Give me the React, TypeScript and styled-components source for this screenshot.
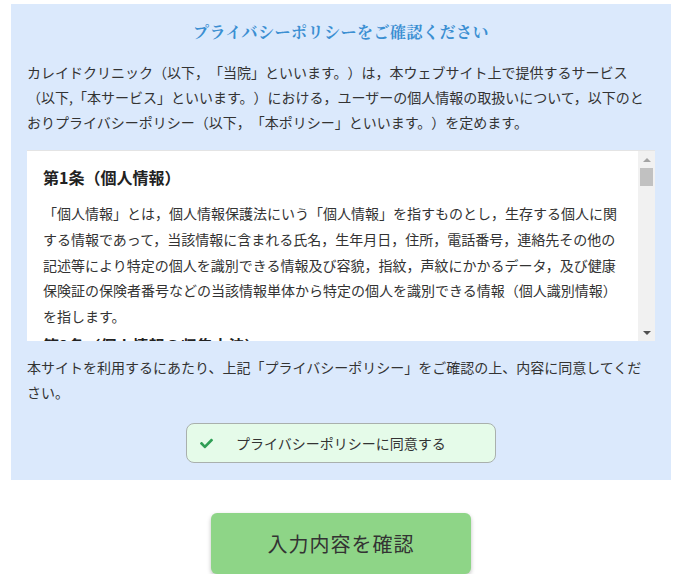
import styled, { createGlobalStyle } from "styled-components";
import { FaCheck } from "react-icons/fa";

const sections = [
  {
    title: "第1条（個人情報）",
    body: "「個人情報」とは，個人情報保護法にいう「個人情報」を指すものとし，生存する個人に関する情報であって，当該情報に含まれる氏名，生年月日，住所，電話番号，連絡先その他の記述等により特定の個人を識別できる情報及び容貌，指紋，声紋にかかるデータ，及び健康保険証の保険者番号などの当該情報単体から特定の個人を識別できる情報（個人識別情報）を指します。",
  },
  {
    title: "第2条（個人情報の収集方法）",
    body: "当院は，ユーザーが利用登録をする際に氏名，生年月日，住所，電話番号，メールアドレス，銀行口座番号，クレジットカード番号，運転免許証番号などの個人情報をお尋ねすることがあります。",
  },
  {
    title: "第3条（個人情報を収集・利用する目的）",
    body: "当院が個人情報を収集・利用する目的は，当院サービスの提供・運営のため，ユーザーからのお問い合わせに回答するためです。",
  },
];

const GlobalStyle = createGlobalStyle`
  body {
    margin: 0;
    background: #ffffff;
    font-family: "Noto Sans CJK JP", "Noto Sans", sans-serif;
    color: #333333;
    text-spacing-trim: space-all;
  }
`;

const Page = styled.div`
  width: 660px;
  margin: 4px 0 0 11px;
  display: flex;
  flex-direction: column;
  align-items: center;
`;

const Panel = styled.section`
  box-sizing: border-box;
  width: 100%;
  background: #dbe9fc;
  padding: 16px 16px 17px;
  display: flex;
  flex-direction: column;
`;

const Title = styled.h2`
  margin: 0 0 16px;
  text-align: center;
  font-family: "Noto Serif CJK JP", "Noto Sans CJK JP", serif;
  font-size: 16px;
  line-height: 24px;
  font-weight: 700;
  color: #3b8fd2;
  letter-spacing: 0.5px;
`;

const Lead = styled.p`
  margin: 0 0 15px;
  font-size: 14px;
  line-height: 25px;
  color: #333333;
`;

const PolicyFrame = styled.div`
  display: flex;
  height: 191px;
  background: #ffffff;
  border-top: 1px solid #e4e4e4;
  box-sizing: border-box;
`;

const PolicyContent = styled.div`
  flex: 1;
  min-width: 0;
  overflow: hidden;
  padding: 14px 16px 0;
`;

const ScrollRail = styled.div`
  width: 17px;
  flex-shrink: 0;
  display: flex;
  flex-direction: column;
  background: #f1f1f1;
`;

const ScrollArrow = styled.div<{ $dir: "up" | "down" }>`
  height: 17px;
  display: flex;
  align-items: center;
  justify-content: center;

  &::before {
    content: "";
    width: 0;
    height: 0;
    border-left: 4px solid transparent;
    border-right: 4px solid transparent;
    ${(p) =>
      p.$dir === "up"
        ? "border-bottom: 4px solid #a3a3a3;"
        : "border-top: 4px solid #505050;"}
  }
`;

const ScrollThumb = styled.div`
  height: 18px;
  margin: 0 2px;
  background: #c1c1c1;
`;

const ScrollTrack = styled.div`
  flex: 1;
`;

const Article = styled.div`
  margin-bottom: 3px;
`;

const ArticleTitle = styled.h3`
  margin: 0 0 12px;
  font-size: 16px;
  line-height: 24px;
  font-weight: 700;
  color: #222222;
`;

const ArticleBody = styled.p`
  margin: 0;
  font-size: 14px;
  line-height: 25.8px;
  color: #333333;
`;

const Note = styled.p`
  margin: 14px 0 18px;
  font-size: 14px;
  line-height: 25px;
  color: #333333;
`;

const AgreeButton = styled.button`
  align-self: center;
  box-sizing: border-box;
  width: 310px;
  height: 40px;
  display: flex;
  align-items: center;
  gap: 23px;
  padding: 0 0 0 13px;
  background: #e5fbe9;
  border: 1px solid #a9b0ad;
  border-radius: 8px;
  font-family: inherit;
  font-size: 14px;
  color: #333333;
  cursor: pointer;

  svg {
    color: #2f9e55;
    font-size: 13px;
    flex-shrink: 0;
  }
`;

const ConfirmButton = styled.button`
  margin-top: 33px;
  width: 260px;
  height: 61px;
  background: #8ed587;
  border: none;
  border-radius: 6px;
  box-shadow: 0 2px 4px rgba(0, 0, 0, 0.25);
  font-family: inherit;
  font-size: 20px;
  letter-spacing: 1px;
  color: #333333;
  cursor: pointer;
`;

export default function App() {
  return (
    <>
      <GlobalStyle />
      <Page>
        <Panel>
          <Title>プライバシーポリシーをご確認ください</Title>
          <Lead>
            カレイドクリニック（以下，「当院」といいます。）は，本ウェブサイト上で提供するサービス（以下,「本サービス」といいます。）における，ユーザーの個人情報の取扱いについて，以下のとおりプライバシーポリシー（以下，「本ポリシー」といいます。）を定めます。
          </Lead>
          <PolicyFrame>
            <PolicyContent>
              {sections.map((s) => (
                <Article key={s.title}>
                  <ArticleTitle>{s.title}</ArticleTitle>
                  <ArticleBody>{s.body}</ArticleBody>
                </Article>
              ))}
            </PolicyContent>
            <ScrollRail>
              <ScrollArrow $dir="up" />
              <ScrollThumb />
              <ScrollTrack />
              <ScrollArrow $dir="down" />
            </ScrollRail>
          </PolicyFrame>
          <Note>
            本サイトを利用するにあたり、上記「プライバシーポリシー」をご確認の上、内容に同意してください。
          </Note>
          <AgreeButton type="button">
            <FaCheck />
            プライバシーポリシーに同意する
          </AgreeButton>
        </Panel>
        <ConfirmButton type="button">入力内容を確認</ConfirmButton>
      </Page>
    </>
  );
}
